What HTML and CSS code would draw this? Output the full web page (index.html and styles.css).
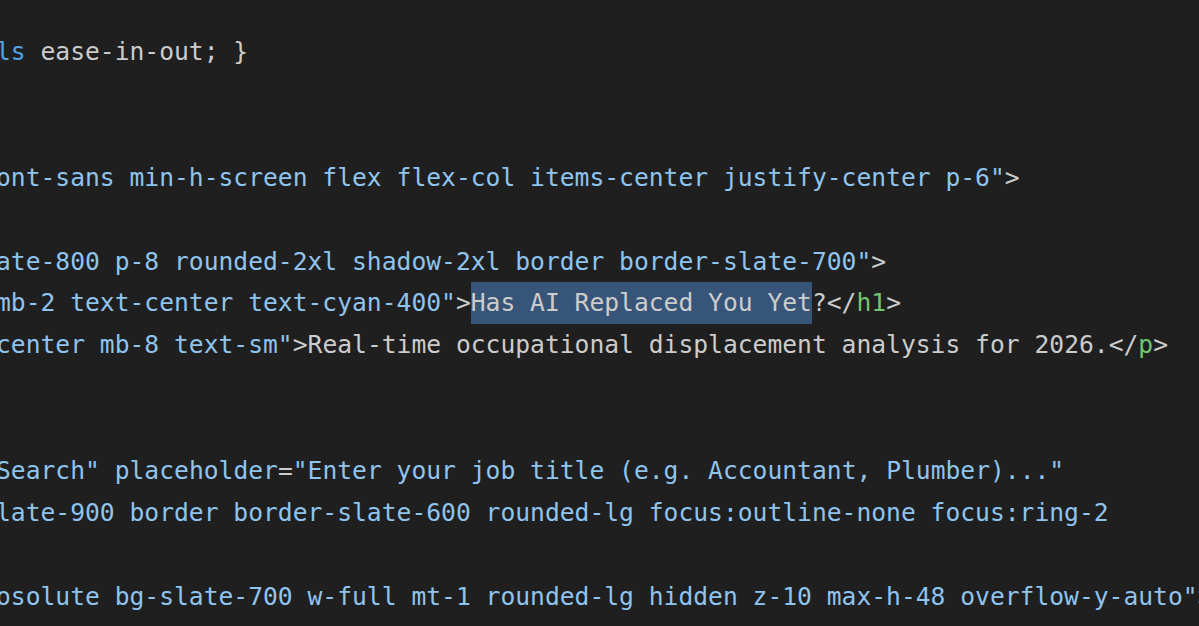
FILE: index.html
```html
<!DOCTYPE html>
<html>
<head>
<meta charset="utf-8">
<link rel="stylesheet" href="styles.css">
</head>
<body>
<div class="editor">
  <div class="code">
    <div class="line"><span class="kw">ls</span> ease-in-out; }</div>
    <div class="line"></div>
    <div class="line"></div>
    <div class="line"><span class="str">ont-sans min-h-screen flex flex-col items-center justify-center p-6"</span><span class="pn">&gt;</span></div>
    <div class="line"></div>
    <div class="line"><span class="str">ate-800 p-8 rounded-2xl shadow-2xl border border-slate-700"</span><span class="pn">&gt;</span></div>
    <div class="line"><span class="str">mb-2 text-center text-cyan-400"</span><span class="pn">&gt;</span><span class="sel">Has AI Replaced You Yet</span>?<span class="pn">&lt;/</span><span class="tag">h1</span><span class="pn">&gt;</span></div>
    <div class="line"><span class="str">center mb-8 text-sm"</span><span class="pn">&gt;</span>Real-time occupational displacement analysis for 2026.<span class="pn">&lt;/</span><span class="tag">p</span><span class="pn">&gt;</span></div>
    <div class="line"></div>
    <div class="line"></div>
    <div class="line"><span class="str">Search"</span> <span class="attr">placeholder</span><span class="pn">=</span><span class="str">"Enter your job title (e.g. Accountant, Plumber)..."</span></div>
    <div class="line"><span class="str">late-900 border border-slate-600 rounded-lg focus:outline-none focus:ring-2</span></div>
    <div class="line"></div>
    <div class="line"><span class="str">osolute bg-slate-700 w-full mt-1 rounded-lg hidden z-10 max-h-48 overflow-y-auto"</span><span class="pn">&gt;</span></div>
  </div>
</div>
</body>
</html>
```
FILE: styles.css
```css
html, body {
  margin: 0;
  padding: 0;
  background: #1f1f1f;
  overflow: hidden;
}
.editor {
  width: 1199px;
  height: 626px;
  background: #1f1f1f;
  overflow: hidden;
}
.code {
  padding-top: 31px;
  margin-left: -4px;
  font-family: "DejaVu Sans Mono", monospace;
  font-size: 24.65px;
  line-height: 41.92px;
  color: #cccccc;
}
.line {
  height: 41.92px;
  white-space: pre;
}
.kw { color: #4fa3e6; }
.str { color: #8fc4ee; }
.attr { color: #8fc4ee; }
.pn { color: #cccccc; }
.tag { color: #6fc76f; }
.sel {
  background: #375578;
  display: inline-block;
  height: 41.92px;
  vertical-align: top;
}
```
